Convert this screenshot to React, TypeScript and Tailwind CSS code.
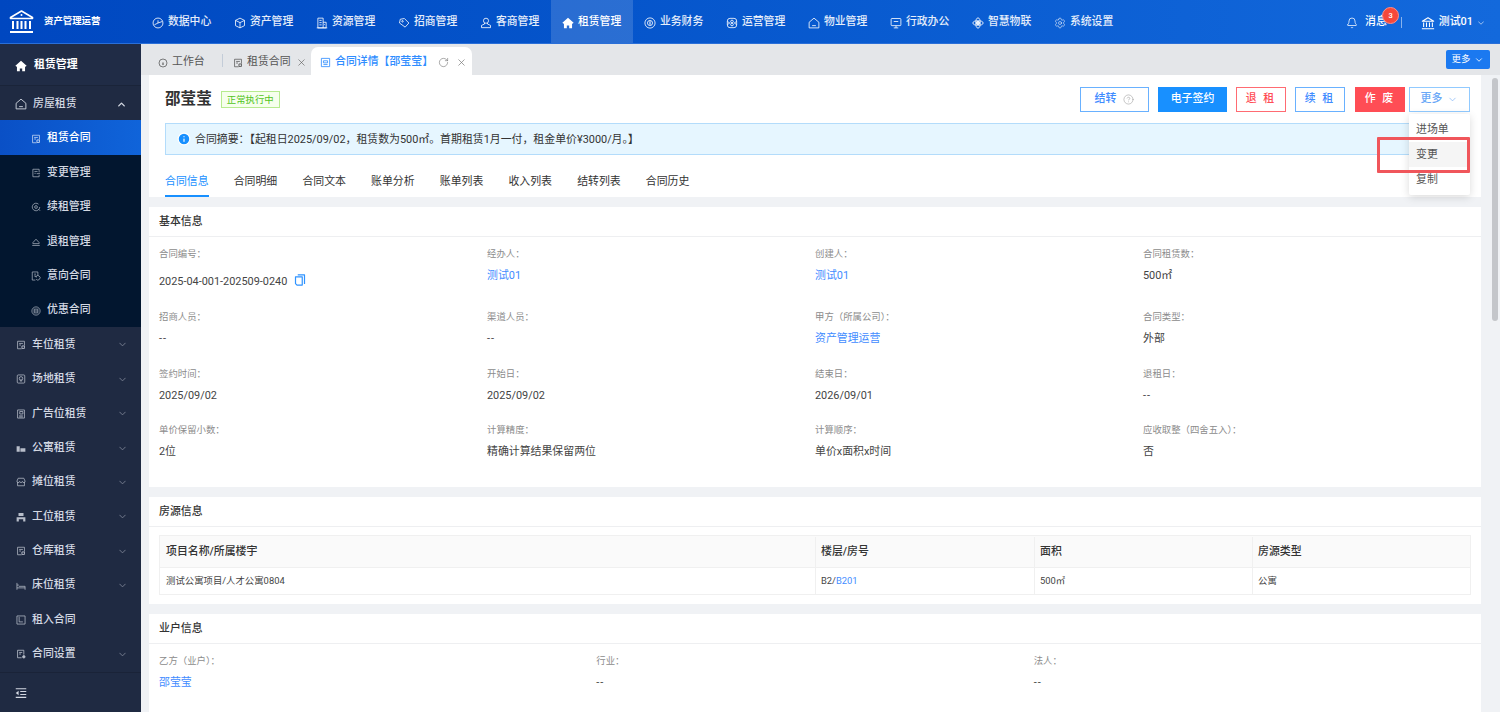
import type { ReactNode } from 'react'
import { Bell, ChevronDown, ChevronUp, CircleHelp, Info, RotateCw, Settings, X } from 'lucide-react'

const font = { fontFamily: 'Roboto, "Noto Sans CJK SC", sans-serif' }

type IconProps = { size?: number; className?: string }

function Svg({ size = 12, className, children }: IconProps & { children: ReactNode }) {
  return (
    <svg
      width={size}
      height={size}
      viewBox="0 0 16 16"
      fill="none"
      stroke="currentColor"
      strokeWidth="1.2"
      strokeLinejoin="round"
      className={`shrink-0 ${className ?? ''}`}
    >
      {children}
    </svg>
  )
}

// icons drawn after the ones in the screenshot
const PieIcon = (p: IconProps) => (
  <Svg {...p}><circle cx="8" cy="8" r="6.6" /><path d="M8 4.4V8l-4.8 2.4M8 8l5.6-2" /></Svg>
)
const CubeIcon = (p: IconProps) => (
  <Svg {...p}><path d="M8 1.5 14 4.5v7L8 14.5 2 11.5v-7zM2 4.5 8 7.5l6-3M8 7.5v7" /></Svg>
)
const BuildingIcon = (p: IconProps) => (
  <Svg {...p}><path d="M2.5 14.5v-13h7v13zM9.5 7h4v7.5h-4M1 14.5h14M4.5 4.5h3M4.5 7.5h3M4.5 10.5h3M11 10h1" /></Svg>
)
const TagIcon = (p: IconProps) => (
  <Svg {...p}><path d="M8.5 2 14.5 8l-5 5.5L2 8l1-5z" /><circle cx="6" cy="5.8" r="1" /></Svg>
)
const PersonIcon = (p: IconProps) => (
  <Svg {...p}><circle cx="8" cy="5" r="3.4" /><path d="M6 8v1.4L2 11.2v3h12v-3L10 9.4V8" /></Svg>
)
const HomeSolid = (p: IconProps) => (
  <svg width={p.size ?? 12} height={p.size ?? 12} viewBox="0 0 16 16" className={`shrink-0 ${p.className ?? ''}`} fill="currentColor">
    <path d="M8 1 15.5 7.6 14 9l-.6-.5V15H9.6v-3.6H6.4V15H2.6V8.5L2 9 .5 7.6z" />
  </svg>
)
const CoinIcon = (p: IconProps) => (
  <Svg {...p}><circle cx="8" cy="8" r="6.8" /><circle cx="8" cy="8" r="3.4" /><path d="M8 5.6v4.8" strokeWidth="1.6" /></Svg>
)
const OpsIcon = (p: IconProps) => (
  <Svg {...p}><rect x="1.8" y="1.8" width="12.4" height="12.4" rx="3.5" /><circle cx="8" cy="6" r="1.8" /><circle cx="8" cy="10" r="1.8" /><path d="M2 6l3 2-3 2M14 6l-3 2 3 2" /></Svg>
)
const HouseIcon = (p: IconProps) => (
  <Svg {...p}><path d="M8 1.5 14.5 7v7.5h-13V7zM5.5 11.5h5" /></Svg>
)
const ScreenIcon = (p: IconProps) => (
  <Svg {...p}><rect x="1.5" y="2" width="13" height="9.5" rx="1" /><path d="M5 6h6M8 11.5v3M5 14.5h6" /></Svg>
)
const OrbitIcon = (p: IconProps) => (
  <Svg {...p}>
    <circle cx="8" cy="8" r="2.2" fill="currentColor" />
    <ellipse cx="8" cy="8" rx="6.8" ry="3" />
    <ellipse cx="8" cy="8" rx="3" ry="6.8" />
  </Svg>
)
const DocCorner = (p: IconProps) => (
  <Svg {...p}><path d="M9 14H2.5V2h11v7M5 5.5h6M5 8h3" /><rect x="9.5" y="9.5" width="4" height="4" strokeWidth="1.4" /></Svg>
)
const DocArrow = (p: IconProps) => (
  <Svg {...p}><path d="M13 7V2H3v12h10v-3M5.5 5.5h5M5.5 8.5h2M9 9h5.5" /></Svg>
)
const RenewIcon = (p: IconProps) => (
  <Svg {...p}><path d="M14 8a6 6 0 1 1-2-4.5M14.5 14 11.5 11" /><circle cx="8" cy="8" r="2.2" /></Svg>
)
const ExitIcon = (p: IconProps) => (
  <Svg {...p}><path d="M3 9 8 3.5 13 9M2 13.5h12" /><path d="M3 9v1.6h10V9" /></Svg>
)
const IntentIcon = (p: IconProps) => (
  <Svg {...p}><path d="M7 14.5H2v-13h9v5" /><path d="M5 5h3M5 8h2" /><path d="M9.5 9.5h-2v-2M7.6 9.4a3.6 3.6 0 1 1 .6 3.8" /></Svg>
)
const DiscountIcon = (p: IconProps) => (
  <Svg {...p}><circle cx="8" cy="8" r="6.6" /><rect x="5" y="5" width="6" height="6" /><path d="M5 8h6" /></Svg>
)
const PinDocIcon = (p: IconProps) => (
  <Svg {...p}><rect x="2" y="1.5" width="12" height="13" rx="1.5" /><circle cx="8" cy="7" r="2.8" /><path d="M6 9.2 8 12l2-2.8" /></Svg>
)
const AdDocIcon = (p: IconProps) => (
  <Svg {...p}><path d="M2.5 1.5h11v13h-11zM5 11h6M5 12.8h6" /><rect x="6" y="4" width="5" height="4" /></Svg>
)
const FlatsIcon = (p: IconProps) => (
  <svg width={p.size ?? 12} height={p.size ?? 12} viewBox="0 0 16 16" className={`shrink-0 ${p.className ?? ''}`} fill="currentColor">
    <path d="M1 14V5h5v9zM7 14V8.5h8V14z" />
  </svg>
)
const StallIcon = (p: IconProps) => (
  <Svg {...p}><path d="M2.5 8v6h11V8M1.5 6.5 3.5 2h9l2 4.5a2 2 0 0 1-4.2.6 2.4 2.4 0 0 1-4.6 0 2 2 0 0 1-4.2-.6z" /></Svg>
)
const DeskIcon = (p: IconProps) => (
  <svg width={p.size ?? 12} height={p.size ?? 12} viewBox="0 0 16 16" className={`shrink-0 ${p.className ?? ''}`} fill="currentColor">
    <path d="M4 1.5h8v5H4zM1 8.5h14V15h-3.5v-3.5h-7V15H1z" />
  </svg>
)
const BedIcon = (p: IconProps) => (
  <Svg {...p}><path d="M1.5 3v11M1.5 6.5h3M1.5 11h13M14.5 8.5v5.5M4.5 8.5h10" /></Svg>
)
const BookIcon = (p: IconProps) => (
  <Svg {...p} ><rect x="1.5" y="1.5" width="13" height="13" /><path d="M5 3v8h6" /></Svg>
)
const SetDocIcon = (p: IconProps) => (
  <svg width={p.size ?? 12} height={p.size ?? 12} viewBox="0 0 16 16" className={`shrink-0 ${p.className ?? ''}`} fill="none" stroke="currentColor" strokeWidth="1.3">
    <path d="M9 14H2.5V2h10v7M5 5.5h5M5 8h3" />
    <circle cx="12.5" cy="12.5" r="2" fill="currentColor" />
  </svg>
)
const ToggleIcon = (p: IconProps) => (
  <svg width={p.size ?? 13} height={p.size ?? 13} viewBox="0 0 16 16" className={`shrink-0 ${p.className ?? ''}`} fill="currentColor">
    <path d="M1 1.5h14v1.6H1zM1 13h14v1.6H1zM7 5.2h8v1.6H7zM7 9.2h8v1.6H7zM4.8 5v6L1 8z" />
  </svg>
)
const GaugeIcon = (p: IconProps) => (
  <Svg {...p}><circle cx="8" cy="8" r="6.4" /><path d="M8 11V7" strokeWidth="1.8" /></Svg>
)
const PanelIcon = (p: IconProps) => (
  <Svg {...p}><rect x="2" y="2" width="12" height="12" /><path d="M5 5.5h6v3H5zM5 11h6" /></Svg>
)
const CopyIcon = (p: IconProps) => (
  <svg width={p.size ?? 12} height={p.size ?? 12} viewBox="0 0 16 16" className={`shrink-0 ${p.className ?? ''}`} fill="none" stroke="currentColor" strokeWidth="1.6" strokeLinejoin="round">
    <path d="M5 1.2h9v12" />
    <path d="M2 3.8h9v11H4l-2-2z" />
  </svg>
)
const BankIcon = (p: IconProps) => (
  <Svg {...p}><path d="M1.5 6 8 2l6.5 4zM3 7.5v5M6.3 7.5v5M9.7 7.5v5M13 7.5v5M1 14.5h14" /></Svg>
)

const topNav = [
  { label: '数据中心', icon: PieIcon },
  { label: '资产管理', icon: CubeIcon },
  { label: '资源管理', icon: BuildingIcon },
  { label: '招商管理', icon: TagIcon },
  { label: '客商管理', icon: PersonIcon },
  { label: '租赁管理', icon: HomeSolid, active: true },
  { label: '业务财务', icon: CoinIcon },
  { label: '运营管理', icon: OpsIcon },
  { label: '物业管理', icon: HouseIcon },
  { label: '行政办公', icon: ScreenIcon },
  { label: '智慧物联', icon: OrbitIcon },
  { label: '系统设置', icon: Settings },
]

const subMenu = [
  { label: '租赁合同', icon: DocCorner, active: true },
  { label: '变更管理', icon: DocArrow },
  { label: '续租管理', icon: RenewIcon },
  { label: '退租管理', icon: ExitIcon },
  { label: '意向合同', icon: IntentIcon },
  { label: '优惠合同', icon: DiscountIcon },
]

const groups = [
  { label: '车位租赁', icon: DocCorner, arrow: true },
  { label: '场地租赁', icon: PinDocIcon, arrow: true },
  { label: '广告位租赁', icon: AdDocIcon, arrow: true },
  { label: '公寓租赁', icon: FlatsIcon, arrow: true },
  { label: '摊位租赁', icon: StallIcon, arrow: true },
  { label: '工位租赁', icon: DeskIcon, arrow: true },
  { label: '仓库租赁', icon: DocCorner, arrow: true },
  { label: '床位租赁', icon: BedIcon, arrow: true },
  { label: '租入合同', icon: BookIcon, arrow: false },
  { label: '合同设置', icon: SetDocIcon, arrow: true },
]

const detailTabs = ['合同信息', '合同明细', '合同文本', '账单分析', '账单列表', '收入列表', '结转列表', '合同历史']

const baseFields: { label: string; value: string; link?: boolean; copy?: boolean }[] = [
  { label: '合同编号：', value: '2025-04-001-202509-0240', copy: true },
  { label: '经办人：', value: '测试01', link: true },
  { label: '创建人：', value: '测试01', link: true },
  { label: '合同租赁数：', value: '500㎡' },
  { label: '招商人员：', value: '--' },
  { label: '渠道人员：', value: '--' },
  { label: '甲方（所属公司）：', value: '资产管理运营', link: true },
  { label: '合同类型：', value: '外部' },
  { label: '签约时间：', value: '2025/09/02' },
  { label: '开始日：', value: '2025/09/02' },
  { label: '结束日：', value: '2026/09/01' },
  { label: '退租日：', value: '--' },
  { label: '单价保留小数：', value: '2位' },
  { label: '计算精度：', value: '精确计算结果保留两位' },
  { label: '计算顺序：', value: '单价x面积x时间' },
  { label: '应收取整（四舍五入）：', value: '否' },
]

function Field({ label, value, link, copy }: { label: string; value: string; link?: boolean; copy?: boolean }) {
  return (
    <div>
      <div className="h-5 text-[9.4px] leading-5 text-[#8c8c8c]">{label}</div>
      <div
        className={`flex items-center gap-[7px] text-[10.9px] ${copy ? 'mt-[6px] h-[24px]' : 'mt-[2px] h-[20px]'} ${
          link ? 'text-[#3f8cff]' : 'text-[#444]'
        }`}
      >
        {value === '--' ? <span className="tracking-[1px]">--</span> : value}
        {copy && <CopyIcon size={12} className="-mt-[5px] text-[#2f93ff]" />}
      </div>
    </div>
  )
}

function Card({ title, children }: { title: string; children: ReactNode }) {
  return (
    <section className="mt-[10px] bg-white">
      <div className="flex h-[30px] items-center border-b border-[#eeeff1] px-[10px] pt-[2px] text-[10.9px] font-medium text-[#333]">
        {title}
      </div>
      {children}
    </section>
  )
}

function OutlineBtn({ color, w, children }: { color: string; w: string; children: ReactNode }) {
  return (
    <button className={`flex h-[25px] items-center justify-center border text-[10.9px] ${color} ${w}`}>{children}</button>
  )
}

export default function App() {
  return (
    <div className="flex h-screen flex-col overflow-hidden bg-[#f0f2f5]" style={font}>
      {/* top bar */}
      <header className="flex h-[44px] shrink-0 border-b border-[#2a6fd8] bg-gradient-to-r from-[#0047c0] to-[#1369dc] text-white">
        <div className="flex w-[141px] shrink-0 items-center pl-[9px]">
          <svg width="25" height="25" viewBox="0 0 25 25" fill="none" stroke="white">
            <path d="M1.5 8.5 12.5 2l11 6.5v1h-22z" strokeWidth="1.6" strokeLinejoin="round" />
            <circle cx="12.5" cy="6" r="1" fill="white" stroke="none" />
            <path d="M4 12v8M8.5 12v8M12.5 12v8M16.5 12v8M21 12v8" strokeWidth="2" />
            <path d="M1 23h23" strokeWidth="2" />
          </svg>
          <span className="ml-[10px] text-[9.4px] font-bold">资产管理运营</span>
        </div>
        {topNav.map((n) => (
          <div
            key={n.label}
            className={`flex w-[82px] shrink-0 items-center pl-[11px] pt-[2px] text-[10.8px] font-medium ${
              n.active ? 'bg-white/15' : 'text-white/90'
            }`}
          >
            <n.icon size={12} className="mr-[4px] shrink-0" {...(n.icon === Settings ? { strokeWidth: 1.2 } : {})} />
            {n.label}
          </div>
        ))}
        <div className="ml-auto flex items-center pr-[14px] pt-[2px] text-[10.9px] font-medium">
          <Bell size={12} strokeWidth={1.5} />
          <span className="relative ml-[7px] mr-[14px]">
            消息
            <span className="absolute -top-[7px] left-[17px] flex h-[17px] w-[17px] items-center justify-center rounded-full border border-[#ff8f87] bg-[#f5483b] text-[7.5px]">
              3
            </span>
          </span>
          <span className="h-[11px] w-px bg-white/50" />
          <BankIcon size={14} className="ml-[19px] mr-[4px]" />
          <span>测试01</span>
          <ChevronDown size={10} className="ml-[3px] opacity-70" />
        </div>
      </header>

      <div className="flex min-h-0 flex-1">
        {/* side menu */}
        <aside className="flex w-[141px] shrink-0 flex-col bg-[#1f2a42] text-[10.9px] font-medium text-[#d3d8e2]">
          <div className="flex h-[42px] shrink-0 items-center border-b border-[#1a2439] bg-[#202c46] pl-[15px] pt-[2px] font-bold text-white">
            <HomeSolid size={12} className="mr-[7px]" />
            租赁管理
          </div>
          <div className="flex h-[34.4px] shrink-0 items-center pl-[15px] pr-[14px] pt-[2px]">
            <HouseIcon size={12} className="mr-[6px]" />
            房屋租赁
            <ChevronUp size={11} strokeWidth={3} className="ml-auto" />
          </div>
          <div className="bg-[#02162f]">
            {subMenu.map((s) => (
              <div
                key={s.label}
                className={`flex h-[34.4px] items-center pl-[31px] pt-[2px] ${
                  s.active ? 'bg-gradient-to-r from-[#0a50c6] to-[#1064da] text-white' : ''
                }`}
              >
                <s.icon size={10} className="mr-[6px] opacity-80" />
                {s.label}
              </div>
            ))}
          </div>
          {groups.map((g) => (
            <div key={g.label} className="flex h-[34.4px] shrink-0 items-center pl-[16px] pr-[13px] pt-[2px]">
              <g.icon size={10} className="mr-[6px] opacity-85" />
              {g.label}
              {g.arrow && <ChevronDown size={11} strokeWidth={2} className="ml-auto opacity-50" />}
            </div>
          ))}
          <div className="mt-auto flex h-[40px] shrink-0 items-center border-t border-[#1a2338] pl-[15px]">
            <ToggleIcon size={12} />
          </div>
        </aside>

        <div className="flex min-w-0 flex-1 flex-col">
          {/* tab strip */}
          <div className="flex h-[31px] shrink-0 items-end bg-[#e4e6e9] text-[10.9px] text-[#555]">
            <div className="flex h-[28px] w-[81px] items-center pl-[17px] pt-[3px]">
              <GaugeIcon size={10} className="mr-[4px]" />
              工作台
            </div>
            <div className="mb-[8px] h-[13px] w-px bg-[#c3ccd8]" />
            <div className="flex h-[28px] w-[88px] items-center pl-[10px] pt-[3px]">
              <DocCorner size={10} className="mr-[4px]" />
              租赁合同
              <X size={11} strokeWidth={1.3} className="ml-[5px]" />
            </div>
            <div className="flex h-[28px] w-[161px] items-center rounded-t-[7px] bg-white pl-[9px] pt-[3px] text-[#2f8dff]">
              <PanelIcon size={11} className="mr-[4px]" />
              <span className="-mr-[2px] font-medium">合同详情【邵莹莹】</span>
              <RotateCw size={11} strokeWidth={1.2} className="ml-[7px] text-[#666]" />
              <X size={11} strokeWidth={1.5} className="ml-[7px] text-[#777]" />
            </div>
            <button className="mb-[6px] ml-auto mr-[10px] flex h-[19px] w-[44px] items-center justify-center rounded-[2px] bg-[#1b79f0] text-[9.4px] text-white">
              更多
              <ChevronDown size={10} className="ml-[4px]" />
            </button>
          </div>

          <div className="flex min-h-0 flex-1">
            <main className="ml-[8px] w-[1332px] shrink-0 overflow-hidden">
              {/* contract head */}
              <section className="relative h-[122px] bg-white pl-[16px] pr-[11px]">
                <div className="flex h-[48px] items-start justify-between pt-[11px]">
                  <div className="flex items-center pt-[2px]">
                    <h1 className="text-[15.6px] font-bold leading-[23px] text-[#333]">邵莹莹</h1>
                    <span className="ml-[9px] flex h-[17px] w-[59px] items-center justify-center border border-[#b7eb8f] bg-[#f6ffed] pt-px text-[9.4px] text-[#52c41a]">
                      正常执行中
                    </span>
                  </div>
                  <div className="flex gap-[9px] pt-px font-medium">
                    <OutlineBtn color="border-[#69b1ff] text-[#3f8cff]" w="w-[69px]">
                      结转
                      <CircleHelp size={11} strokeWidth={1.2} className="ml-[7px] text-[#999]" />
                    </OutlineBtn>
                    <OutlineBtn color="border-[#1890ff] bg-[#1890ff] text-white" w="w-[69px]">
                      电子签约
                    </OutlineBtn>
                    <OutlineBtn color="border-[#ff6b72] tracking-[2px] text-[#ff4d55]" w="w-[50px]">
                      退 租
                    </OutlineBtn>
                    <OutlineBtn color="border-[#69b1ff] tracking-[2px] text-[#3f8cff]" w="w-[50px]">
                      续 租
                    </OutlineBtn>
                    <OutlineBtn color="ml-px border-[#ff4d55] bg-[#ff4d55] tracking-[2px] text-white" w="w-[50px]">
                      作 废
                    </OutlineBtn>
                    <OutlineBtn color="-ml-[5px] border-[#91caff] text-[#6aa8f7]" w="w-[61px]">
                      更多
                      <ChevronDown size={11} strokeWidth={1.3} className="ml-[5px]" />
                    </OutlineBtn>
                  </div>
                </div>
                <div className="flex h-[32px] items-center border border-[#b3dcfb] bg-[#e6f6ff] pl-[11px] pt-[2px] text-[10.9px] text-[#333]">
                  <Info size={14} fill="#1890ff" stroke="white" strokeWidth={2} className="-mt-[2px] mr-[4px]" />
                  合同摘要：【起租日2025/09/02，租赁数为500㎡。首期租赁1月一付，租金单价¥3000/月。】
                </div>
                <nav className="mt-[10px] flex gap-[25px] text-[10.9px] text-[#333]">
                  {detailTabs.map((t, i) => (
                    <div
                      key={t}
                      className={`h-[32px] w-[43.7px] whitespace-nowrap pt-[9px] ${
                        i === 0 ? 'border-b-2 border-[#1890ff] text-[#1890ff]' : ''
                      }`}
                    >
                      {t}
                    </div>
                  ))}
                </nav>

                {/* dropdown */}
                <div className="absolute right-[11px] top-[39px] z-10 w-[61px] rounded-[2px] bg-white py-[3px] text-[10.9px] text-[#555] shadow-[0_2px_8px_rgba(0,0,0,0.15)]">
                  <div className="flex h-[25px] items-center pl-[7px] pt-[2px]">进场单</div>
                  <div className="flex h-[25px] items-center bg-[#f5f5f5] pl-[7px] pt-[2px]">变更</div>
                  <div className="flex h-[25px] items-center pl-[7px] pt-[2px]">复制</div>
                </div>
                <div className="absolute right-[11px] top-[62px] z-20 h-[36px] w-[93px] rounded-[1px] border-[3px] border-[#f0565b]" />
              </section>

              <Card title="基本信息">
                <div className="grid h-[250px] grid-cols-4 grid-rows-[63px_57px_56px_auto] px-[10px] pt-[7px]">
                  {baseFields.map((f) => (
                    <Field key={f.label} {...f} />
                  ))}
                </div>
              </Card>

              <Card title="房源信息">
                <div className="h-[77px] px-[10px] pt-[8px]">
                  <div className="border border-[#f0f0f0]">
                    <div className="grid h-[31px] grid-cols-[656px_219px_218px_1fr] bg-[#fafafa] pt-px text-[10.9px] font-medium text-[#333]">
                      <div className="flex items-center border-r border-[#f0f0f0] pl-[6px]">项目名称/所属楼宇</div>
                      <div className="flex items-center border-r border-[#f0f0f0] pl-[5px]">楼层/房号</div>
                      <div className="flex items-center border-r border-[#f0f0f0] pl-[5px]">面积</div>
                      <div className="flex items-center pl-[5px]">房源类型</div>
                    </div>
                    <div className="grid h-[27px] grid-cols-[656px_219px_218px_1fr] border-t border-[#f0f0f0] text-[9.4px] text-[#444]">
                      <div className="flex items-center border-r border-[#f0f0f0] pl-[6px]">测试公寓项目/人才公寓0804</div>
                      <div className="flex items-center border-r border-[#f0f0f0] pl-[5px]">
                        B2/<span className="text-[#3f8cff]">B201</span>
                      </div>
                      <div className="flex items-center border-r border-[#f0f0f0] pl-[5px]">500㎡</div>
                      <div className="flex items-center pl-[5px]">公寓</div>
                    </div>
                  </div>
                </div>
              </Card>

              <Card title="业户信息">
                <div className="grid grid-cols-3 px-[10px] pb-[40px] pt-[7px]">
                  <Field label="乙方（业户）：" value="邵莹莹" link />
                  <Field label="行业：" value="--" />
                  <Field label="法人：" value="--" />
                </div>
              </Card>
            </main>

            <div className="flex-1 pl-[11px] pt-[3px]">
              <div className="h-[243px] w-[6px] rounded-full bg-[#c4c6ca]" />
            </div>
          </div>
        </div>
      </div>
    </div>
  )
}
